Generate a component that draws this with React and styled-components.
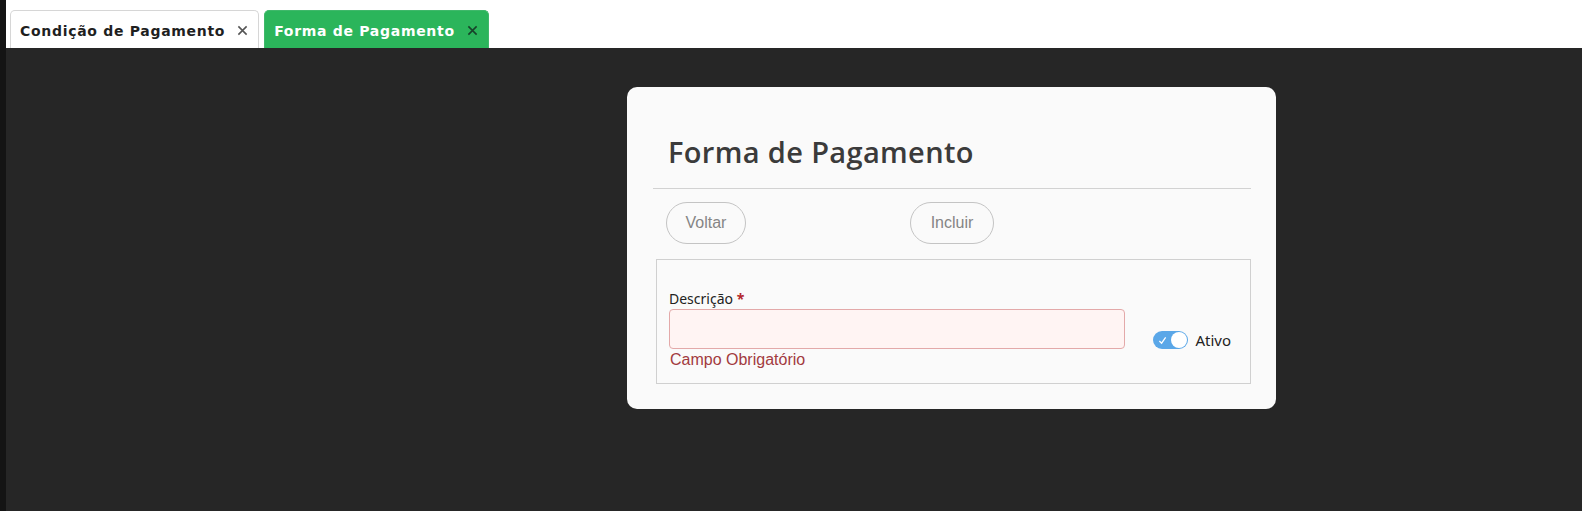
import React from "react";
import styled, { createGlobalStyle } from "styled-components";

const GlobalStyle = createGlobalStyle`
  html, body {
    margin: 0;
    padding: 0;
    background: #262626;
  }
  * {
    box-sizing: border-box;
  }
`;

const tabs = [
  { label: "Condição de Pagamento", active: false },
  { label: "Forma de Pagamento", active: true },
];

const App = () => {
  return (
    <>
      <GlobalStyle />
      <Page>
        <SideStrip />
        <Main>
          <TabBar>
            {tabs.map((t) => (
              <Tab key={t.label} $active={t.active}>
                <span>{t.label}</span>
                <CloseIcon $active={t.active} viewBox="0 0 12 12">
                  <path d="M1.5 1.5 L10.5 10.5 M10.5 1.5 L1.5 10.5" />
                </CloseIcon>
              </Tab>
            ))}
          </TabBar>

          <Content>
            <Card>
              <Title>Forma de Pagamento</Title>
              <Divider />
              <Actions>
                <PillButton $w={80}>Voltar</PillButton>
                <PillButton $w={84} $gap={164}>Incluir</PillButton>
              </Actions>

              <FieldBox>
                <Field>
                  <Label>
                    Descrição <Required>*</Required>
                  </Label>
                  <Input type="text" />
                  <ErrorText>Campo Obrigatório</ErrorText>
                </Field>
                <ToggleWrap>
                  <Switch>
                    <svg viewBox="0 0 10 10" width="9" height="9">
                      <path d="M1.5 5.5 L4 8 L8.5 1.5" fill="none" stroke="#fff" strokeWidth="1.4" />
                    </svg>
                    <Knob />
                  </Switch>
                  <ToggleLabel>Ativo</ToggleLabel>
                </ToggleWrap>
              </FieldBox>
            </Card>
          </Content>
        </Main>
      </Page>
    </>
  );
};
export default App;

const Page = styled.div`
  display: flex;
  min-height: 511px;
  background: #262626;
`;

const SideStrip = styled.div`
  width: 6px;
  flex-shrink: 0;
  background: #141414;
`;

const Main = styled.div`
  flex: 1;
  display: flex;
  flex-direction: column;
`;

const TabBar = styled.div`
  height: 48px;
  background: #fff;
  display: flex;
  align-items: flex-end;
  gap: 5px;
  padding-left: 4px;
`;

const Tab = styled.div`
  height: 38px;
  display: flex;
  align-items: center;
  gap: 12px;
  padding: 0 10px 0 9px;
  border: 1px solid ${(p) => (p.$active ? "#3fb86a" : "#d6d6d6")};
  border-bottom: none;
  border-radius: 5px 5px 0 0;
  background: ${(p) => (p.$active ? "#2bb55b" : "#fff")};
  color: ${(p) => (p.$active ? "#fff" : "#1f1f1f")};
  font-family: "DejaVu Sans", Verdana, sans-serif;
  font-weight: bold;
  font-size: 14px;
  letter-spacing: 0.7px;
  span {
    padding-top: 2px;
  }
`;

const CloseIcon = styled.svg`
  width: 11px;
  height: 11px;
  margin-top: 1px;
  path {
    stroke: ${(p) => (p.$active ? "#17432a" : "#555")};
    stroke-width: 1.7;
    fill: none;
  }
`;

const Content = styled.div`
  padding: 39px 0 0 621px;
`;

const Card = styled.div`
  width: 649px;
  background: #fafafa;
  border-radius: 10px;
  padding: 46px 25px 25px 26px;
`;

const Title = styled.h1`
  margin: 0 0 0 15px;
  font-family: "Open Sans", "Noto Sans", sans-serif;
  font-weight: 600;
  font-size: 29px;
  line-height: 38px;
  letter-spacing: 0.35px;
  color: #3b3b3b;
  padding-bottom: 17px;
`;

const Divider = styled.div`
  height: 1px;
  background: #d2d2d2;
`;

const Actions = styled.div`
  display: flex;
  padding: 13px 0 15px 13px;
`;

const PillButton = styled.button`
  height: 42px;
  width: ${(p) => p.$w}px;
  padding: 0;
  margin-left: ${(p) => (p.$gap ? `${p.$gap}px` : "0")};
  border: 1px solid #c4c4c4;
  border-radius: 21px;
  background: transparent;
  color: #858585;
  font-family: "Liberation Sans", Arial, sans-serif;
  font-size: 16px;
  cursor: pointer;
`;

const FieldBox = styled.div`
  margin-left: 3px;
  border: 1px solid #d0d0d0;
  display: flex;
  align-items: flex-start;
  padding: 30px 19px 13px 12px;
`;

const Field = styled.div`
  width: 456px;
  display: flex;
  flex-direction: column;
`;

const Label = styled.label`
  font-family: "Noto Sans", "Open Sans", sans-serif;
  font-size: 14px;
  line-height: 18px;
  color: #222;
  margin-bottom: 1px;
`;

const Required = styled.span`
  color: #b3282d;
  font-weight: bold;
`;

const Input = styled.input`
  height: 40px;
  width: 100%;
  border: 1px solid #e3a9a9;
  border-radius: 4px;
  background: #fff4f3;
  outline: none;
`;

const ErrorText = styled.div`
  font-family: "Liberation Sans", Arial, sans-serif;
  font-size: 16px;
  line-height: 20px;
  margin-top: 1px;
  color: #a23b3f;
  padding-left: 1px;
`;

const ToggleWrap = styled.div`
  margin: 40px 0 0 auto;
  display: flex;
  align-items: center;
  gap: 7px;
`;

const Switch = styled.div`
  width: 35px;
  height: 18px;
  border-radius: 9px;
  background: #5aa7e8;
  display: flex;
  align-items: center;
  justify-content: space-between;
  padding: 0 1px 0 5px;
`;

const Knob = styled.div`
  width: 16px;
  height: 16px;
  border-radius: 50%;
  background: #fff;
`;

const ToggleLabel = styled.span`
  font-family: "Noto Sans", "Open Sans", sans-serif;
  font-size: 15px;
  color: #222;
`;
